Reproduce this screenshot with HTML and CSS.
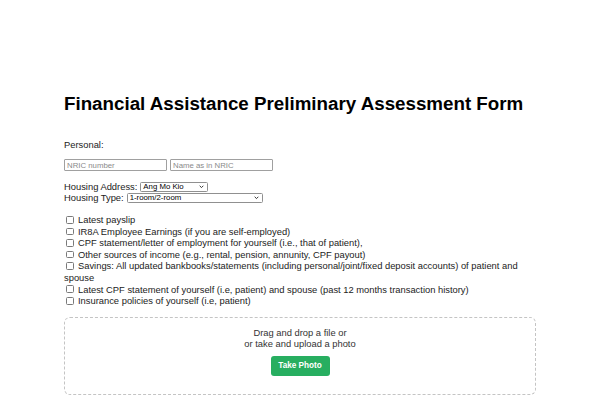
FILE: index.html
```html
<!DOCTYPE html>
<html lang="en">
<head>
<meta charset="utf-8">
<title>Financial Assistance Preliminary Assessment Form</title>
<link rel="stylesheet" href="styles.css">
</head>
<body>
<main class="page">
  <h1 class="title">Financial Assistance Preliminary Assessment Form</h1>
  <p class="section-label">Personal:</p>
  <div class="inputs">
    <input class="text-input" type="text" placeholder="NRIC number">
    <input class="text-input" type="text" placeholder="Name as in NRIC">
  </div>
  <div class="fields">
    <div class="field">
      <label>Housing Address:</label>
      <span class="select-wrap">
        <select class="select select-address">
          <option>Ang Mo Kio</option>
          <option>Bedok</option>
          <option>Bishan</option>
        </select>
        <svg class="chev" viewBox="0 0 6 4" width="6" height="4"><path d="M0.8 0.8 L3 3 L5.2 0.8" fill="none" stroke="#222" stroke-width="1.1"/></svg>
      </span>
    </div>
    <div class="field">
      <label>Housing Type:</label>
      <span class="select-wrap">
        <select class="select select-type">
          <option>1-room/2-room</option>
          <option>3-room</option>
          <option>4-room</option>
        </select>
        <svg class="chev" viewBox="0 0 6 4" width="6" height="4"><path d="M0.8 0.8 L3 3 L5.2 0.8" fill="none" stroke="#222" stroke-width="1.1"/></svg>
      </span>
    </div>
  </div>
  <div class="docs">
    <div class="doc"><label><input class="check" type="checkbox"> Latest payslip</label></div>
    <div class="doc"><label><input class="check" type="checkbox"> IR8A Employee Earnings (if you are self-employed)</label></div>
    <div class="doc"><label><input class="check" type="checkbox"> CPF statement/letter of employment for yourself (i.e., that of patient),</label></div>
    <div class="doc"><label><input class="check" type="checkbox"> Other sources of income (e.g., rental, pension, annunity, CPF payout)</label></div>
    <div class="doc"><label><input class="check" type="checkbox"> Savings: All updated bankbooks/statements (including personal/joint/fixed deposit accounts) of patient and spouse</label></div>
    <div class="doc"><label><input class="check" type="checkbox"> Latest CPF statement of yourself (i.e, patient) and spouse (past 12 months transaction history)</label></div>
    <div class="doc"><label><input class="check" type="checkbox"> Insurance policies of yourself (i.e, patient)</label></div>
  </div>
  <div class="dropzone">
    <p class="drop-text">Drag and drop a file or<br>or take and upload a photo</p>
    <button class="photo-btn" type="button">Take Photo</button>
  </div>
</main>
</body>
</html>
```
FILE: styles.css
```css
body {
  margin: 0;
  font-family: "Liberation Sans", Arial, sans-serif;
  font-size: 9.375px;
  color: #222;
  background: #fff;
}
.page {
  width: 472px;
  margin: 0 auto;
  padding-top: 93px;
}
.title {
  margin: 0 0 25px;
  font-size: 18.75px;
  line-height: 22px;
  font-weight: bold;
  color: #000;
}
.section-label {
  margin: 0 0 8px;
  line-height: 11px;
}
.inputs {
  display: flex;
  gap: 3px;
}
.text-input {
  box-sizing: border-box;
  width: 103px;
  height: 12px;
  padding: 0 2px;
  border: 1px solid #a0a0a0;
  border-radius: 1px;
  font-family: "Liberation Sans", Arial, sans-serif;
  font-size: 7.8px;
  color: #222;
}
.text-input::placeholder {
  color: #8a8a8a;
}
.fields {
  margin-top: 10px;
}
.field {
  display: flex;
  align-items: center;
  gap: 3px;
  height: 11.5px;
}
.select-wrap {
  position: relative;
  display: inline-flex;
}
.select {
  appearance: none;
  -webkit-appearance: none;
  box-sizing: border-box;
  height: 10px;
  padding: 0 0 0 2px;
  border: 1px solid #909090;
  border-radius: 1.5px;
  font-family: "Liberation Sans", Arial, sans-serif;
  font-size: 7.8px;
  line-height: 8px;
  color: #000;
  background: #fff;
}
.select-address {
  width: 68px;
}
.select-type {
  width: 136px;
}
.chev {
  position: absolute;
  right: 4px;
  top: 3px;
  width: 5px;
  height: 3.5px;
  pointer-events: none;
}
.docs {
  margin-top: 11px;
}
.doc {
  line-height: 11.6px;
}
.check {
  appearance: none;
  -webkit-appearance: none;
  box-sizing: border-box;
  width: 7.6px;
  height: 7.6px;
  margin: 0 1.4px 0 2.4px;
  border: 1px solid #7a7a7a;
  border-radius: 1.5px;
  background: #fff;
  vertical-align: -0.5px;
}
.dropzone {
  margin-top: 9px;
  box-sizing: border-box;
  height: 78px;
  border: 1px dashed #c4c4c4;
  border-radius: 6px;
  padding-top: 10px;
  text-align: center;
  color: #333;
}
.drop-text {
  margin: 0 0 6px;
  line-height: 11px;
}
.photo-btn {
  box-sizing: border-box;
  width: 59px;
  height: 20px;
  padding: 0;
  font-family: "Liberation Sans", Arial, sans-serif;
  font-size: 8.2px;
  font-weight: bold;
  color: #fff;
  background: #27ae60;
  border: none;
  border-radius: 3px;
}
```
